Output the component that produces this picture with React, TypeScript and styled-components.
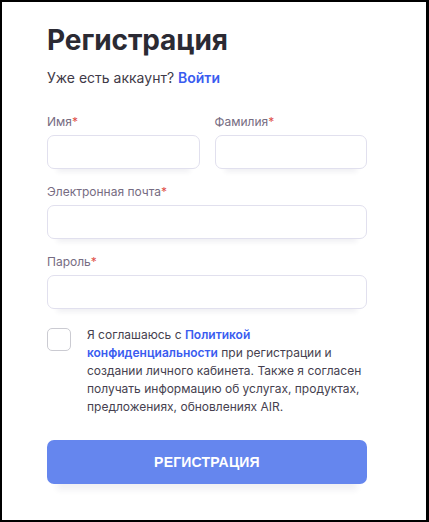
import React from "react";
import styled, { createGlobalStyle } from "styled-components";

const GlobalStyle = createGlobalStyle`
  html, body {
    margin: 0;
    padding: 0;
    background: #ffffff;
  }
  body {
    font-family: Inter, "Noto Sans", "Liberation Sans", sans-serif;
  }
  * {
    box-sizing: border-box;
  }
`;

const Frame = styled.div`
  width: 429px;
  height: 522px;
  border: 2px solid #000;
  border-right-width: 3px;
  background: #fff;
  padding: 20px 0 0 45px;
`;

const Form = styled.form`
  width: 320px;
  display: flex;
  flex-direction: column;
`;

const Title = styled.h1`
  margin: 0;
  font-size: 28px;
  line-height: 36px;
  font-weight: 700;
  color: #2b2a33;
  letter-spacing: -0.1px;
`;

const Subtitle = styled.p`
  margin: 10px 0 25px;
  font-size: 14px;
  line-height: 20px;
  color: #3f3a48;
`;

const Link = styled.a`
  color: #3a5cf0;
  font-weight: 600;
  text-decoration: none;
`;

const Row = styled.div`
  display: grid;
  grid-template-columns: 1fr 1fr;
  column-gap: 15px;
`;

const Field = styled.label`
  display: flex;
  flex-direction: column;
  margin-bottom: 14px;
`;

const Label = styled.span`
  font-size: 12px;
  line-height: 18px;
  color: #766c82;
  margin-bottom: 4px;
`;

const Star = styled.span`
  color: #e0504a;
`;

const Input = styled.input`
  height: 34px;
  width: 100%;
  border: 1px solid #e1e0ee;
  border-radius: 7px;
  background: #fff;
  outline: none;
  font: inherit;
  padding: 0 12px;
  box-shadow: 0 13px 5px -10px rgba(40, 40, 90, 0.07);
`;

const Agreement = styled.div`
  display: flex;
  align-items: flex-start;
  gap: 16px;
  margin-top: 3px;
`;

const Checkbox = styled.span<{ checked?: boolean }>`
  flex: none;
  width: 24px;
  height: 23px;
  margin-top: 2px;
  border: 1px solid #cbcbd2;
  border-radius: 5px;
  background: ${(p) => (p.checked ? "#6485ee" : "#fff")};
`;

const AgreementText = styled.p`
  margin: 0;
  width: 282px;
  font-size: 12px;
  line-height: 18px;
  color: #463f4f;
`;

const Submit = styled.button`
  margin-top: 24px;
  height: 44px;
  width: 100%;
  border: none;
  border-radius: 7px;
  background: #6586ee;
  color: #fff;
  font-family: "Liberation Sans", Arial, sans-serif;
  font-weight: 700;
  font-size: 14px;
  letter-spacing: 0.2px;
  box-shadow: 0 16px 6px -10px rgba(40, 40, 90, 0.07);
  cursor: pointer;
`;

function Required({ children }: { children: React.ReactNode }) {
  return (
    <Label>
      {children}
      <Star>*</Star>
    </Label>
  );
}

export default function App() {
  return (
    <>
      <GlobalStyle />
      <Frame>
        <Form onSubmit={(e) => e.preventDefault()}>
          <Title>Регистрация</Title>
          <Subtitle>
            Уже есть аккаунт? <Link href="#">Войти</Link>
          </Subtitle>
          <Row>
            <Field>
              <Required>Имя</Required>
              <Input type="text" />
            </Field>
            <Field>
              <Required>Фамилия</Required>
              <Input type="text" />
            </Field>
          </Row>
          <Field>
            <Required>Электронная почта</Required>
            <Input type="email" />
          </Field>
          <Field>
            <Required>Пароль</Required>
            <Input type="password" />
          </Field>
          <Agreement>
            <Checkbox />
            <AgreementText>
              Я соглашаюсь с <Link href="#">Политикой конфиденциальности</Link>{" "}
              при регистрации и создании личного кабинета. Также я согласен
              получать информацию об услугах, продуктах, предложениях,
              обновлениях AIR.
            </AgreementText>
          </Agreement>
          <Submit type="submit">РЕГИСТРАЦИЯ</Submit>
        </Form>
      </Frame>
    </>
  );
}
